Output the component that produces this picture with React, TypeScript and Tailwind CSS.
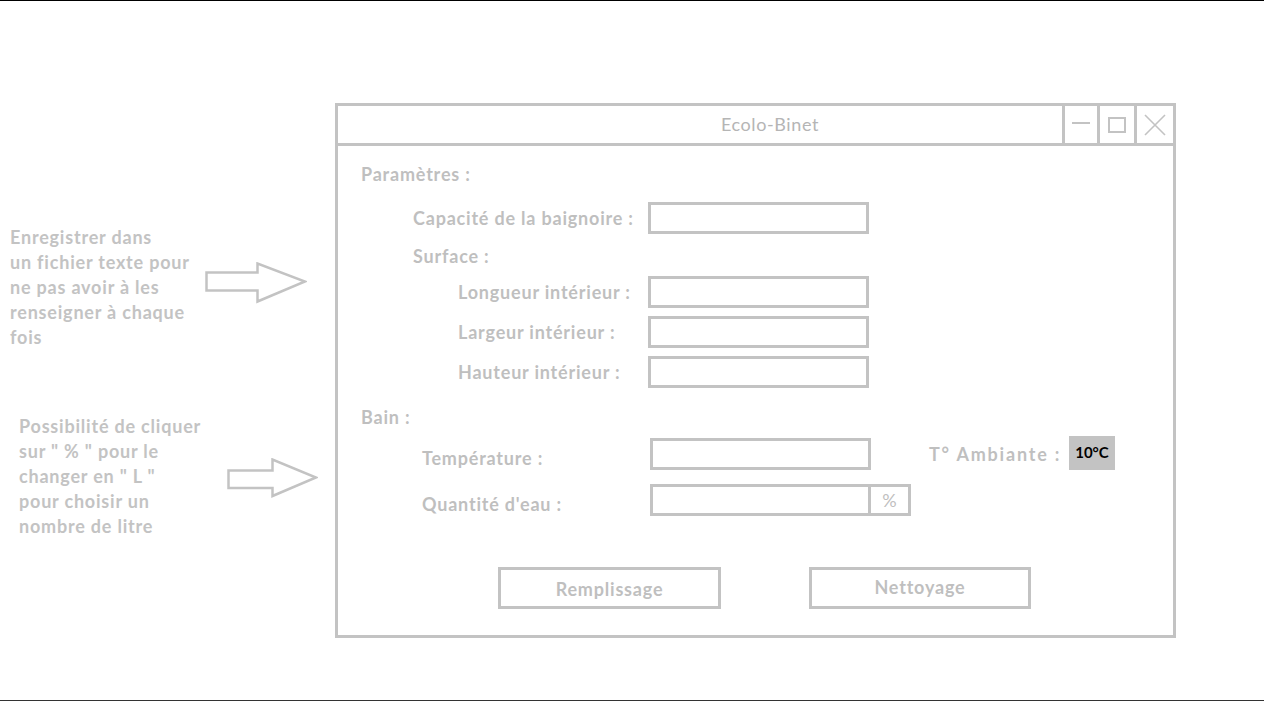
import type { ReactNode } from 'react'

const font = { fontFamily: 'Lato, "Open Sans", "Liberation Sans", sans-serif' }

function Field({ w = 'w-[221px]' }: { w?: string }) {
  return <div className={`h-[32px] ${w} border-[3px] border-[#c3c3c3] bg-white`} />
}

function Label({ children, className = '' }: { children: ReactNode; className?: string }) {
  return <span className={`text-[18px] tracking-[0.8px] font-bold leading-[20px] text-[#bfbfbf] whitespace-nowrap ${className}`}>{children}</span>
}

function Arrow({ w, h, d }: { w: number; h: number; d: string }) {
  return (
    <svg width={w} height={h} viewBox={`0 0 ${w} ${h}`} fill="none" stroke="#c3c3c3" strokeWidth="2.5" strokeLinejoin="miter">
      <path d={d} />
    </svg>
  )
}

export default function App() {
  return (
    <div className="h-[701px] w-[1264px] bg-white border-t border-black border-b border-b-[#333] overflow-hidden" style={font}>
      <div className="flex">
        {/* annotations */}
        <div className="w-[335px] flex flex-col">
          <div className="mt-[224px] flex">
            <p className="pl-[10px] w-[205px] text-[18px] tracking-[0.8px] font-bold leading-[25px] text-[#c3c3c3] whitespace-nowrap">
              Enregistrer dans<br />un fichier texte pour<br />ne pas avoir à les<br />renseigner à chaque<br />fois
            </p>
            <div className="mt-[37px]">
              <Arrow w={102} h={42} d="M1.5 10.5 H52.5 V1.5 L100 19.5 L52.5 39.5 V28.5 H1.5 Z" />
            </div>
          </div>
          <div className="mt-[64px] flex">
            <p className="pl-[19px] w-[227px] text-[18px] tracking-[0.8px] font-bold leading-[25px] text-[#c3c3c3] whitespace-nowrap">
              Possibilité de cliquer<br />sur " % " pour le<br />changer en " L "<br />pour choisir un<br />nombre de litre
            </p>
            <div className="mt-[44px]">
              <Arrow w={91} h={40} d="M1.5 12.5 H45.5 V1.5 L89 19.5 L45.5 38 V30 H1.5 Z" />
            </div>
          </div>
        </div>

        {/* window */}
        <div className="mt-[102px] w-[841px] h-[535px] border-[3px] border-[#c3c3c3] flex flex-col">
          <div className="h-[40px] border-b-[3px] border-[#c3c3c3] flex">
            <div className="flex-1 pl-[140px] flex items-center justify-center text-[18px] tracking-[0.6px] text-[#b5b5b5]">Ecolo-Binet</div>
            <div className="w-[35px] border-l-[3px] border-[#c3c3c3] flex items-center justify-center">
              <svg width="20" height="20" viewBox="0 0 20 20" stroke="#c3c3c3" strokeWidth="2" className="-mt-[4px]"><path d="M1 10 H19" /></svg>
            </div>
            <div className="w-[37px] border-l-[3px] border-[#c3c3c3] flex items-center justify-center">
              <svg width="20" height="20" viewBox="0 0 20 20" fill="none" stroke="#c3c3c3" strokeWidth="2"><rect x="2" y="3" width="16" height="14" /></svg>
            </div>
            <div className="w-[39px] border-l-[3px] border-[#c3c3c3] flex items-center justify-center">
              <svg width="22" height="22" viewBox="0 0 22 22" stroke="#c3c3c3" strokeWidth="1.6"><path d="M1 1 L21 21 M21 1 L1 21" /></svg>
            </div>
          </div>

          <div className="flex flex-col pl-[23px]">
            <div className="mt-[17px] h-[20px]"><Label>Paramètres :</Label></div>

            <div className="mt-[19px] h-[32px] flex items-center pl-[52px]">
              <Label className="w-[235px]">Capacité de la baignoire :</Label>
              <Field />
            </div>

            <div className="mt-[11px] h-[20px] pl-[52px]"><Label>Surface :</Label></div>

            <div className="mt-[11px] h-[32px] flex items-center pl-[97px]">
              <Label className="w-[190px]">Longueur intérieur :</Label>
              <Field />
            </div>
            <div className="mt-[8px] h-[32px] flex items-center pl-[97px]">
              <Label className="w-[190px]">Largeur intérieur :</Label>
              <Field />
            </div>
            <div className="mt-[8px] h-[32px] flex items-center pl-[97px]">
              <Label className="w-[190px]">Hauteur intérieur :</Label>
              <Field />
            </div>

            <div className="mt-[18px] h-[20px]"><Label>Bain :</Label></div>

            <div className="mt-[12px] h-[32px] flex items-center pl-[61px]">
              <Label className="w-[228px] pt-[8px]">Température :</Label>
              <Field />
              <Label className="ml-[58px] w-[140px] tracking-[1.8px]">T° Ambiante :</Label>
              <div className="-mt-[3px] w-[46px] h-[34px] bg-[#c3c3c3] flex items-center justify-center text-[15px] font-bold text-black">10°C</div>
            </div>

            <div className="mt-[14px] h-[32px] flex items-center pl-[61px]">
              <Label className="w-[228px] pt-[8px]">Quantité d'eau :</Label>
              <Field />
              <div className="w-[40px] h-[32px] border-[3px] border-l-0 border-[#c3c3c3] flex items-center justify-center text-[18px] text-[#bfbfbf]">%</div>
            </div>

            <div className="mt-[51px] h-[42px] flex pl-[137px]">
              <div className="w-[223px] h-[42px] border-[3px] border-[#c3c3c3] flex items-center justify-center pt-[2px]">
                <Label>Remplissage</Label>
              </div>
              <div className="ml-[88px] w-[222px] h-[42px] border-[3px] border-[#c3c3c3] flex items-center justify-center pb-[3px]">
                <Label>Nettoyage</Label>
              </div>
            </div>
          </div>
        </div>
      </div>
    </div>
  )
}
